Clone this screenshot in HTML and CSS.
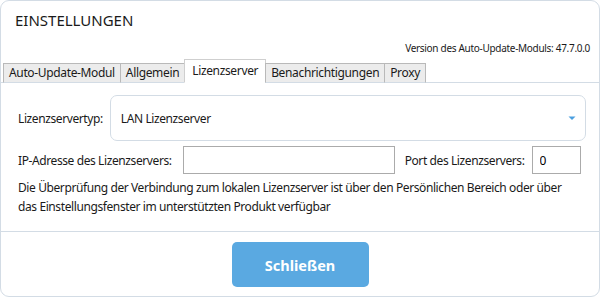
FILE: index.html
```html
<!DOCTYPE html>
<html lang="de">
<head>
    <meta charset="UTF-8">
    <meta name="viewport" content="width=device-width, initial-scale=1.0">
    <title>Einstellungen</title>
    <link rel="stylesheet" href="styles.css">
</head>
<body>
    <div class="dialog">
        <div class="header">
            <div class="title">EINSTELLUNGEN</div>
            <div class="version">Version des Auto-Update-Moduls: 47.7.0.0</div>
        </div>

        <div class="tabs">
            <div class="tab">Auto-Update-Modul</div>
            <div class="tab">Allgemein</div>
            <div class="tab active">Lizenzserver</div>
            <div class="tab">Benachrichtigungen</div>
            <div class="tab">Proxy</div>
        </div>

        <div class="panel">
            <div class="row">
                <label class="label">Lizenzservertyp:</label>
                <div class="select">
                    <span>LAN Lizenzserver</span>
                    <svg class="arrow" width="8" height="5" viewBox="0 0 8 5"><path d="M0.5 0.5h7L4 4z" fill="#4b9fe0"/></svg>
                </div>
            </div>
            <div class="row row-inputs">
                <label class="label">IP-Adresse des Lizenzservers:</label>
                <input class="input input-ip" type="text" value="">
                <label class="label label-port">Port des Lizenzservers:</label>
                <input class="input input-port" type="text" value="0">
            </div>
            <p class="note">Die Überprüfung der Verbindung zum lokalen Lizenzserver ist über den Persönlichen Bereich oder über das Einstellungsfenster im unterstützten Produkt verfügbar</p>
        </div>

        <div class="footer">
            <button class="btn">Schließen</button>
        </div>
    </div>
</body>
</html>
```

FILE: styles.css
```css
body {
    margin: 0;
    font-family: "Noto Sans", sans-serif;
    color: #1a1a1a;
    background: #fff;
}
.dialog {
    width: 600px;
    height: 297px;
    box-sizing: border-box;
    border: 1px solid #d3dce5;
    border-radius: 9px;
    display: flex;
    flex-direction: column;
    overflow: hidden;
}
.header {
    padding: 8px 9px 0 14px;
}
.title {
    font-size: 15px;
    line-height: 22px;
    height: 22px;
}
.version {
    text-align: right;
    font-size: 10px;
    letter-spacing: -0.3px;
    line-height: 14px;
    margin-top: 10px;
}
.tabs {
    display: flex;
    align-items: flex-end;
    height: 23px;
    margin-top: 4px;
    padding-left: 2px;
    border-bottom: 1px solid #d3dce5;
}
.tab {
    font-size: 12px;
    letter-spacing: -0.35px;
    line-height: 18px;
    height: 18px;
    padding: 0 5px;
    background: #ececec;
    border: 1px solid #b9b9b9;
    margin-right: -1px;
    margin-bottom: -1px;
    border-bottom: 1px solid #d3dce5;
}
.tab.active {
    background: #fff;
    height: 22px;
    line-height: 22px;
    padding: 0 7px;
    border-color: #cfcfcf;
    border-bottom-color: #fff;
}
.panel {
    flex: 1;
    padding: 12px 13px 0 17px;
    font-size: 12px;
    letter-spacing: -0.4px;
}
.row {
    display: flex;
    align-items: center;
}
.label {
    white-space: nowrap;
}
.select {
    flex: 1;
    height: 44px;
    margin-left: 7px;
    border: 1px solid #d3dce5;
    border-radius: 7px;
    display: flex;
    align-items: center;
    justify-content: space-between;
    padding: 0 9px 0 10px;
}
.row-inputs {
    margin-top: 5px;
}
.input {
    height: 28px;
    box-sizing: border-box;
    border: 1px solid #ababab;
    font: inherit;
    letter-spacing: inherit;
    padding: 0 7px;
    margin: 0;
    outline: none;
}
.input-ip {
    width: 212px;
    margin-left: 11px;
}
.label-port {
    margin-left: 10px;
}
.input-port {
    width: 49px;
    margin-left: 7px;
}
.note {
    max-width: 552px;
    margin: 4px 0 0;
    line-height: 19px;
}
.footer {
    height: 65px;
    border-top: 1px solid #d3dce5;
    display: flex;
    justify-content: center;
    padding-top: 10px;
    box-sizing: border-box;
}
.btn {
    width: 137px;
    height: 45px;
    border: none;
    border-radius: 5px;
    background: #5aa9e1;
    color: #fff;
    font-family: inherit;
    font-size: 14.5px;
    font-weight: bold;
}
```
